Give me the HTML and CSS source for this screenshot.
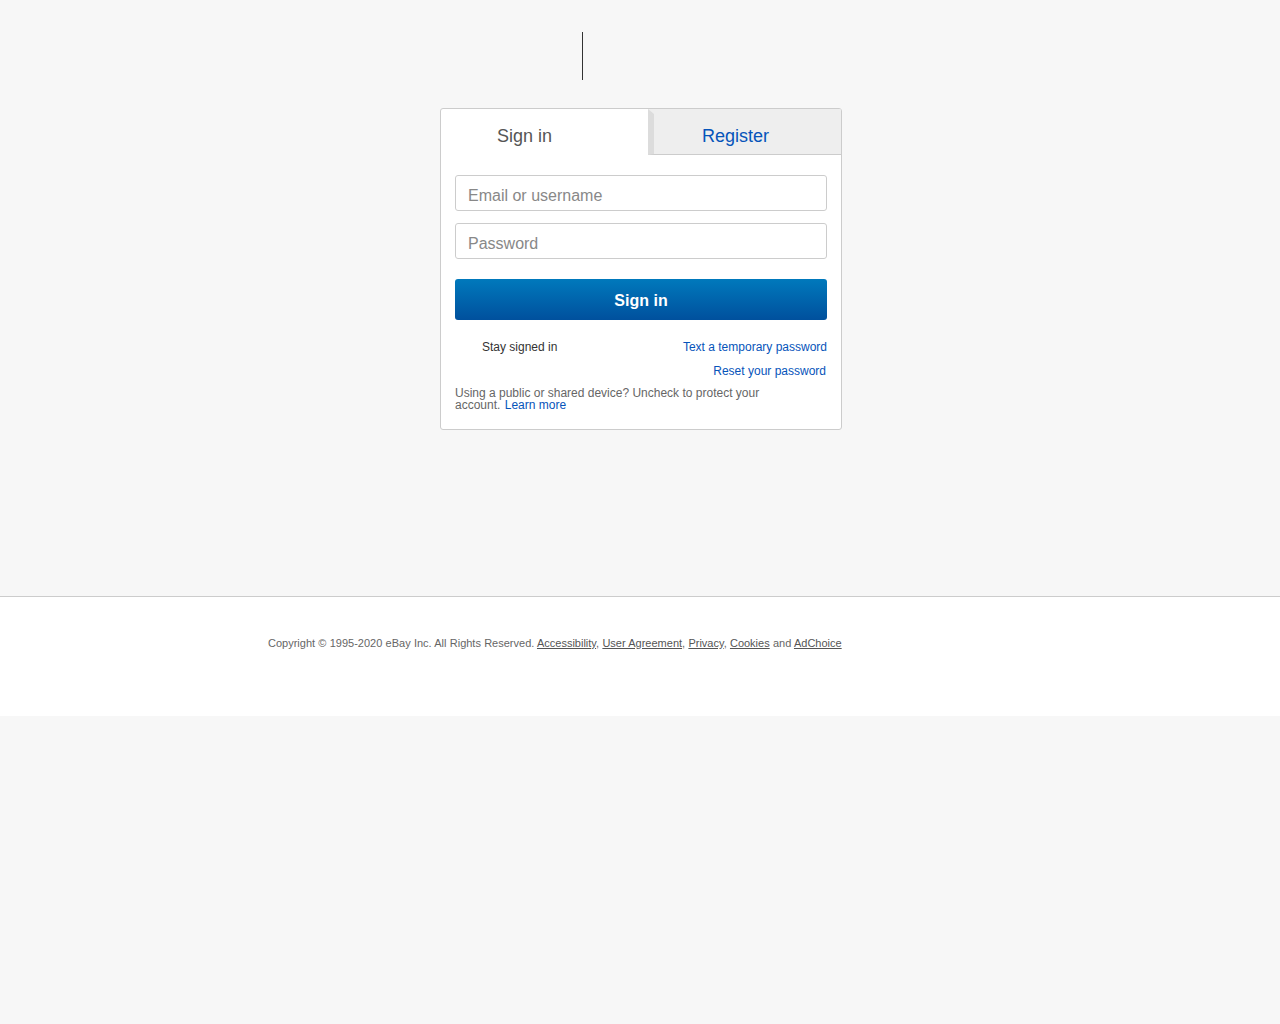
FILE: index.html
```html
<!DOCTYPE html>
<html lang="en">
<head>
    <meta charset="UTF-8">
    <meta name="viewport" content="width=device-width, initial-scale=1.0">
    <title>Sign in or Register | eBay</title>
    <link rel="stylesheet" href="styles.css">
</head>
<body>
    <div class="page">
        <div class="header">
            <span class="logo-mark"></span>
        </div>

        <div class="card">
            <div class="tabs">
                <div class="tab tab-active">Sign in</div>
                <a class="tab tab-other" href="#">Register</a>
            </div>

            <form class="signin-form" onsubmit="return false">
                <input class="field" type="text" placeholder="Email or username">
                <input class="field" type="password" placeholder="Password">
                <button class="signin-btn" type="submit">Sign in</button>

                <div class="row">
                    <label class="stay">Stay signed in</label>
                    <a class="link" href="#">Text a temporary password</a>
                </div>
                <div class="row row-end">
                    <a class="link" href="#">Reset your password</a>
                </div>
                <p class="note">Using a public or shared device? Uncheck to protect your account. <a class="link learn" href="#">Learn more</a></p>
            </form>
        </div>
    </div>

    <div class="footer">
        <div class="footer-inner">
            Copyright &copy; 1995-2020 eBay Inc. All Rights Reserved.
            <a href="#">Accessibility</a>, <a href="#">User Agreement</a>, <a href="#">Privacy</a>, <a href="#">Cookies</a> and <a href="#">AdChoice</a>
        </div>
    </div>
</body>
</html>
```

FILE: styles.css
```css
body {
    margin: 0;
    background-color: #f7f7f7;
    font-family: "Liberation Sans", Arial, Helvetica, sans-serif;
    color: #333;
}
a {
    text-decoration: none;
}
.page {
    padding-bottom: 166px;
}
.header {
    width: 402px;
    margin-left: calc(50% - 200px);
    padding-top: 32px;
    box-sizing: border-box;
    padding-left: 142px;
    height: 80px;
}
.logo-mark {
    display: block;
    width: 1px;
    height: 48px;
    background-color: #333;
}
.card {
    width: 402px;
    box-sizing: border-box;
    margin: 28px 0 0 calc(50% - 200px);
    background-color: #fff;
    border: 1px solid #ccc;
    border-radius: 3px;
    overflow: hidden;
}
.tabs {
    display: flex;
}
.tab {
    height: 46px;
    box-sizing: border-box;
    font-size: 18px;
    line-height: 20px;
    padding-top: 17px;
}
.tab-active {
    width: 207px;
    padding-left: 56px;
    color: #555;
}
.tab-other {
    flex: 1;
    padding-left: 48px;
    color: #0654ba;
    background-color: #eee;
    border-bottom: 1px solid #ccc;
    border-left: 6px solid #dcdcdc;
    border-top: 5px solid #eee;
    padding-top: 12px;
}
.signin-form {
    padding: 20px 14px 18px;
}
.field {
    display: block;
    width: 100%;
    height: 36px;
    box-sizing: border-box;
    margin: 0 0 12px;
    padding: 5px 12px 0;
    border: 1px solid #ccc;
    border-radius: 3px;
    font-family: inherit;
    font-size: 16px;
    color: #333;
    background-color: #fff;
}
.field::placeholder {
    color: #888;
}
.signin-btn {
    display: block;
    width: 100%;
    height: 41px;
    margin-top: 20px;
    padding: 2px 0 0;
    border: none;
    border-radius: 3px;
    background: linear-gradient(#0079bc, #00509d);
    color: #fff;
    font-family: inherit;
    font-size: 16px;
    font-weight: bold;
}
.row {
    display: flex;
    justify-content: space-between;
    font-size: 12px;
    line-height: 14px;
    margin-top: 20px;
}
.row-end {
    justify-content: flex-end;
    margin-top: 10px;
    padding-right: 1px;
}
.stay {
    padding-left: 27px;
    color: #333;
}
.link {
    color: #0654ba;
}
.note {
    width: 310px;
    margin: 9px 0 0;
    font-size: 12px;
    line-height: 12px;
    color: #666;
}
.learn {
    margin-left: 1px;
}
.footer {
    border-top: 1px solid #ccc;
    background-color: #fff;
    height: 120px;
    box-sizing: border-box;
    padding-top: 39px;
}
.footer-inner {
    width: 744px;
    margin: 0 auto;
    font-size: 11px;
    line-height: 14px;
    word-spacing: 0.2px;
    color: #666;
}
.footer-inner a {
    color: #555;
    text-decoration: underline;
}
```
